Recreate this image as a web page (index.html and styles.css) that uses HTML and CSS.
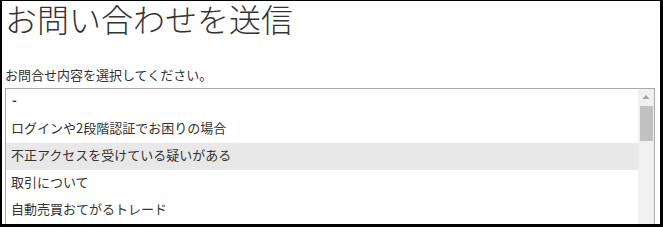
FILE: index.html
```html
<!DOCTYPE html>
<html lang="ja">
<head>
<meta charset="utf-8">
<link rel="stylesheet" href="styles.css">
</head>
<body>
<div class="frame">
  <h1 class="title">お問い合わせを送信</h1>
  <div class="label">お問合せ内容を選択してください。</div>
  <div class="listbox">
    <div class="options">
      <div class="opt dash">-</div>
      <div class="opt">ログインや2段階認証でお困りの場合</div>
      <div class="opt sel">不正アクセスを受けている疑いがある</div>
      <div class="opt">取引について</div>
      <div class="opt">自動売買おてがるトレード</div>
    </div>
    <div class="scrollbar">
      <svg class="arrow" width="16" height="16" viewBox="0 0 16 16"><polygon points="4.5,10 11.5,10 8,6" fill="#a3a3a3"/></svg>
      <div class="thumb"></div>
    </div>
  </div>
</div>
</body>
</html>
```
FILE: styles.css
```css
html, body {
  margin: 0;
  padding: 0;
  background: #fff;
}
.frame {
  box-sizing: border-box;
  width: 663px;
  height: 227px;
  border-style: solid;
  border-color: #000;
  border-width: 1px 3px 3px 2px;
  padding: 0 5px 0 3px;
  overflow: hidden;
  font-family: "Noto Sans CJK JP", "Noto Sans", sans-serif;
  color: #333;
}
.title {
  margin: 0;
  font-size: 32px;
  line-height: 35px;
  font-weight: 300;
  color: #333;
}
.label {
  margin-top: 29px;
  font-size: 13px;
  line-height: 20px;
  color: #333;
}
.listbox {
  margin-top: 3px;
  width: 650px;
  box-sizing: border-box;
  height: 160px;
  border: 1px solid #a9a9a9;
  display: flex;
}
.options {
  flex: 1;
}
.opt {
  height: 27px;
  line-height: 23px;
  padding-left: 5px;
  font-size: 13px;
  color: #333;
  white-space: nowrap;
}
.opt.dash {
  font-weight: 700;
  line-height: 22px;
  padding-left: 6px;
}
.opt.sel {
  background: #e8e8e8;
}
.scrollbar {
  width: 16px;
  background: #f0f0f0;
  display: flex;
  flex-direction: column;
  align-items: center;
}
.arrow {
  display: block;
}
.thumb {
  margin-top: 1px;
  width: 13px;
  height: 35px;
  background: #c1c1c1;
}
```
